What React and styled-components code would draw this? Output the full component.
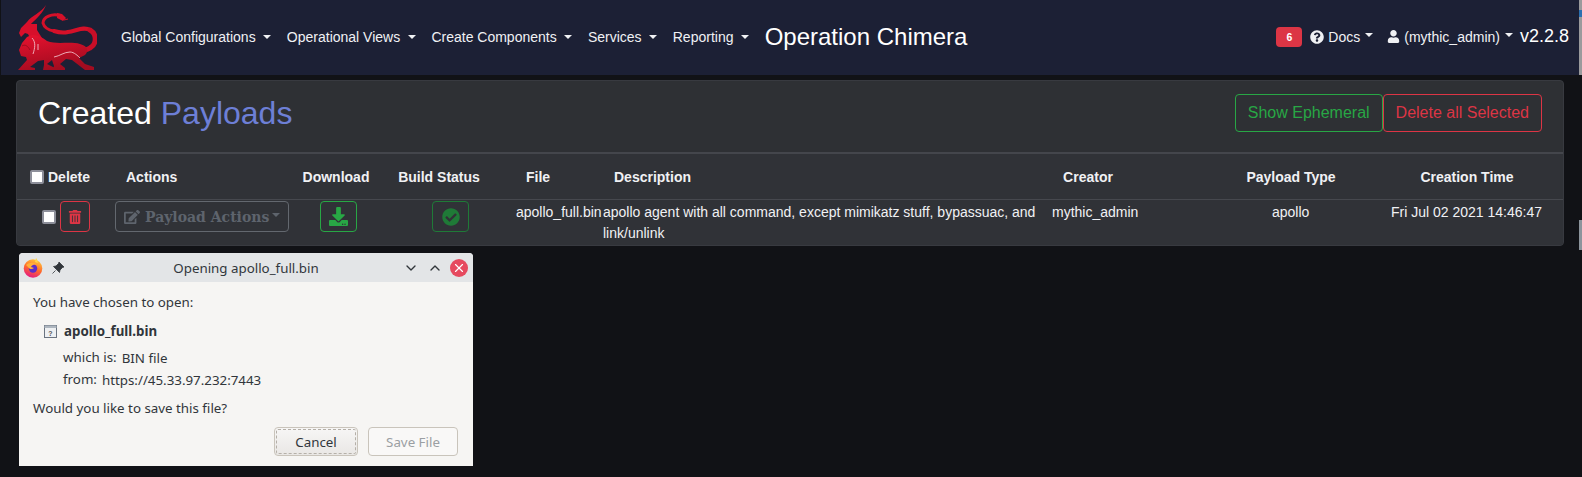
import React from 'react';
import styled, { createGlobalStyle } from 'styled-components';
import { FaTrashAlt, FaEdit, FaDownload, FaCheckCircle, FaQuestionCircle, FaUser } from 'react-icons/fa';
import { FiChevronDown, FiChevronUp, FiX } from 'react-icons/fi';

const GlobalStyle = createGlobalStyle`
  html, body { margin: 0; padding: 0; background: #111216; overflow: hidden; }
  body { font-family: "Liberation Sans", Arial, sans-serif; color: #fff; width: 1582px; height: 477px; position: relative; }
`;

const Sliver = styled.div`
  position: absolute;
  right: 0;
  top: ${p => p.$top}px;
  width: 3px;
  height: ${p => p.$h}px;
  background: ${p => p.$bg};
`;

const Navbar = styled.nav`
  height: 75px;
  width: 1578px;
  margin-left: 1px;
  background: #1c2035;
  display: flex;
  align-items: center;
  padding: 0 10px 2px 16px;
  box-sizing: border-box;
`;

const LogoBox = styled.svg`
  width: 80px;
  height: 75px;
  flex: none;
  margin: 0 24px 0 0;
  align-self: flex-start;
`;

const NavLink = styled.span`
  font-size: 14px;
  color: #f0f1f4;
  margin-right: 15.6px;
  white-space: nowrap;
  &::after {
    content: '';
    display: inline-block;
    margin-left: 7.6px;
    vertical-align: 3px;
    border-top: 4.5px solid #f0f1f4;
    border-left: 4.5px solid transparent;
    border-right: 4.5px solid transparent;
  }
`;

const Operation = styled.span`
  font-size: 24px;
  color: #fff;
`;

const NavRight = styled.div`
  margin-left: auto;
  display: flex;
  align-items: center;
  gap: 8px;
  font-size: 14px;
`;

const Badge = styled.span`
  background: #dc3545;
  border-radius: 4px;
  width: 26px;
  height: 20px;
  display: flex;
  align-items: center;
  justify-content: center;
  font-size: 10.5px;
  font-weight: 700;
`;

const NavMenu = styled.span`
  display: flex;
  align-items: center;
  gap: 4px;
  color: #f0f1f4;
  margin-left: ${p => p.$gap || 0}px;
  &::after {
    content: '';
    margin-left: 1px;
    border-top: 4.5px solid #f0f1f4;
    border-left: 4px solid transparent;
    border-right: 4px solid transparent;
    transform: translateY(-2px);
  }
`;

const Version = styled.span`
  font-size: 18px;
  margin-left: -1px;
`;

const Card = styled.section`
  margin: 5px 18px 0 16px;
  background: #2e3034;
  border-radius: 4px;
  border: 1px solid #383a40;
  box-sizing: border-box;
  height: 166px;
`;

const CardHead = styled.header`
  height: 73px;
  display: flex;
  align-items: center;
  padding: 0 21px 7px 21px;
  border-bottom: 2px solid #44464c;
  box-sizing: border-box;
`;

const Title = styled.h1`
  font-size: 32px;
  font-weight: 400;
  margin: 0;
  color: #fff;
  flex: 1;
  span { color: #6d7fd6; }
`;

const OutlineButton = styled.button`
  font-family: "Liberation Sans", Arial, sans-serif;
  font-size: 16px;
  height: 38px;
  padding: 0 12px;
  background: transparent;
  border: 1px solid ${p => p.$color};
  color: ${p => p.$color};
  border-radius: 4px;
  white-space: nowrap;
`;

const HeaderRow = styled.div`
  height: 46px;
  display: grid;
  grid-template-columns: 100px 173px 92px 114px 84px 420px 176px 230px 122px;
  align-items: center;
  font-size: 14px;
  font-weight: 700;
  color: #f0f1f4;
  background: #303237;
  border-bottom: 1px solid #46484e;
  box-sizing: border-box;
`;

const HeaderCell = styled.div`
  padding-left: ${p => p.$pad || 0}px;
  display: flex;
  align-items: center;
  justify-content: ${p => p.$left ? 'flex-start' : 'center'};
  white-space: nowrap;
`;

const DeleteLabel = styled.span`
  margin-left: 4px;
`;

const DataRow = styled.div`
  height: 45px;
  display: grid;
  grid-template-columns: 98px 205px 112px 84px 87px 449px 220px 119px 1fr;
  background: #303237;
  font-size: 14px;
  color: #f0f1f4;
  border-radius: 0 0 4px 4px;
`;

const DataCell = styled.div`
  line-height: 21px;
  padding-top: 2px;
  white-space: ${p => p.$wrap ? 'normal' : 'nowrap'};
`;

const Check = styled.span`
  display: inline-block;
  width: 14px;
  height: 14px;
  box-sizing: border-box;
  background: #fff;
  border: 2px solid #8d8f9a;
  border-radius: 2px;
  flex: none;
`;

const ActionCell = styled.div`
  display: flex;
  align-items: center;
  height: 31px;
  margin-top: 1px;
  padding-left: ${p => p.$pad || 0}px;
`;

const IconButton = styled.span`
  width: ${p => p.$w || 37}px;
  height: 31px;
  border: 1px solid ${p => p.$color};
  color: ${p => p.$color};
  border-radius: 4px;
  display: flex;
  align-items: center;
  justify-content: center;
  box-sizing: border-box;
  margin-left: ${p => p.$ml || 0}px;
`;

const ActionsButton = styled.span`
  width: 174px;
  height: 31px;
  border: 1px solid #63686f;
  color: #5e646d;
  border-radius: 4px;
  display: flex;
  align-items: center;
  gap: 5px;
  padding-left: 8px;
  box-sizing: border-box;
  font-family: "DejaVu Serif", serif;
  font-weight: 700;
  font-size: 14px;
  white-space: nowrap;
  &::after {
    content: '';
    margin-left: -2px;
    border-top: 4.5px solid #5e646d;
    border-left: 4px solid transparent;
    border-right: 4px solid transparent;
    transform: translateY(-2px);
  }
`;

const Dialog = styled.div`
  margin: 7px 0 0 19px;
  width: 454px;
  height: 213px;
  background: #f6f5f3;
  border-radius: 4px 4px 0 0;
  font-family: "Noto Sans", sans-serif;
  font-size: 13.33px;
  line-height: 18px;
  color: #31363b;
  display: flex;
  flex-direction: column;
`;

const TitleBar = styled.div`
  height: 29px;
  background: #e3e5e7;
  border-radius: 4px 4px 0 0;
  display: grid;
  grid-template-columns: 96px 1fr 96px;
  align-items: center;
  flex: none;
`;

const BarLeft = styled.div`
  display: flex;
  align-items: center;
  gap: 9px;
  padding-left: 4px;
`;

const BarTitle = styled.div`
  text-align: center;
`;

const BarRight = styled.div`
  display: flex;
  align-items: center;
  justify-content: flex-end;
  gap: 8px;
  padding-right: 5px;
`;

const CloseDot = styled.span`
  width: 18px;
  height: 18px;
  border-radius: 50%;
  background: #e64a5f;
  color: #fff;
  display: flex;
  align-items: center;
  justify-content: center;
  margin-left: -1px;
`;

const DialogBody = styled.div`
  padding: 11px 15px 0 14px;
  display: flex;
  flex-direction: column;
  flex: 1;
`;

const FileRow = styled.div`
  display: flex;
  align-items: center;
  gap: 7px;
  margin: 11px 0 0 11px;
  font-weight: 700;
`;

const InfoRow = styled.div`
  display: flex;
  gap: 5px;
  margin: ${p => p.$top}px 0 0 30px;
  span + span { padding-top: 1px; }
`;

const Question = styled.div`
  margin-top: 10px;
`;

const ButtonRow = styled.div`
  display: flex;
  justify-content: flex-end;
  gap: 10px;
  margin-top: 10px;
`;

const DialogButton = styled.span`
  height: 29px;
  width: ${p => p.$w}px;
  box-sizing: border-box;
  border: 1px solid #c9c4bb;
  border-radius: 4px;
  display: flex;
  align-items: center;
  justify-content: center;
  color: ${p => p.$off ? '#9b9fa3' : '#31363b'};
  background: ${p => p.$off ? '#f9f8f7' : 'linear-gradient(#f7f6f5, #e9e7e5)'};
  outline: ${p => p.$off ? 'none' : '1px dashed #b5b0a8'};
  outline-offset: -3px;
`;

const Logo = () => (
  <LogoBox viewBox="17 0 80 75">
    <defs>
      <linearGradient id="red" x1="0" y1="0" x2="0.4" y2="1">
        <stop offset="0" stopColor="#e8122f" />
        <stop offset="1" stopColor="#a30c20" />
      </linearGradient>
    </defs>
    {/* goat head and horn */}
    <path fill="#d80f2b" d="M46 5 C41 13 32 15 27 22 L21 28 L19 33 L21 37 L25 33 L28 34 L30 38 L38 40 L42 38 L37 30 L37 24 L31 24 C37 18 43 13 46 5 Z" />
    {/* snake tail, thinner towards the head */}
    <path fill="none" stroke="#d51029" strokeWidth="3" strokeLinecap="round" d="M60 15.5 C52 13 43 17 43 23 C44 27 48 30 54 31" />
    <path fill="none" stroke="#d51029" strokeWidth="4" strokeLinecap="round" d="M54 31 C60 33 64 33 68 32 C76 31 84 26 90 30" />
    <path fill="none" stroke="#c80e27" strokeWidth="5" strokeLinecap="round" d="M90 30 C97 34 97 44 90 48 C87 50 83 50 80 49" />
    <path fill="#d51029" d="M57 13 L62 14 L66 18 L63 21 L57 18 Z" />
    <path fill="none" stroke="#d51029" strokeWidth="1" d="M64 20 L68 19" />
    {/* lion */}
    <path fill="url(#red)" d="M27 37 C34 33 41 36 47 41 C57 45 70 41 80 44 C88 46 89 51 85 55 L79 58 L85 64 L94 67 L94 70 L85 70 L72 60 L66 59 L60 64 L65 68 L65 70 L53 70 L54 66 L52 60 L47 64 L55 68 L55 70 L43 70 L44 65 L44 60 L38 61 L30 67 L35 68 L35 70 L18 70 L27 60 L26 57 L21 56 L19 50 L22 43 Z" />
    {/* highlights */}
    <path fill="none" stroke="#f2bcc6" strokeWidth="0.9" d="M54 57 C60 56 64 52 70 52 C74 52 78 56 80 58" />
    <path fill="none" stroke="#f2bcc6" strokeWidth="0.9" d="M32 38 C36 42 35 48 33 54" />
    <path fill="none" stroke="#f2bcc6" strokeWidth="0.9" d="M38 44 L38 50" />
    <path fill="none" stroke="#8f0a1c" strokeWidth="0.8" d="M22 46 C25 44 28 46 30 50" />
  </LogoBox>
);

const Firefox = () => (
  <svg width="20" height="20" viewBox="0 0 20 20">
    <defs>
      <linearGradient id="fox" x1="0.7" y1="0" x2="0.3" y2="1">
        <stop offset="0" stopColor="#ffc93c" />
        <stop offset="0.5" stopColor="#ff6b2c" />
        <stop offset="1" stopColor="#e31587" />
      </linearGradient>
    </defs>
    <circle cx="10" cy="10.5" r="9.3" fill="url(#fox)" />
    <path d="M13 0 C15 2 14 3 15 5 L12 4 Z" fill="#ffd84c" />
    <circle cx="10" cy="10.5" r="4.2" fill="#5c2ec9" />
    <path d="M3 7 C6 4 12 4 14 7 C11 6 9 7 8 9 L11 10 C9 12 6 11 5 9 Z" fill="#ffb03a" />
  </svg>
);

const Pin = () => (
  <svg width="12" height="12" viewBox="0 0 12 12">
    <path d="M7 0 L12 5 L10.5 5.5 L8 8 L7.5 10.5 L1.5 4.5 L4 4 L6.5 1.5 Z M3.5 8.5 L0.5 11.5" fill="#31363b" stroke="#31363b" strokeWidth="0.8" />
  </svg>
);

const UnknownFile = () => (
  <svg width="13" height="13" viewBox="0 0 13 13">
    <rect x="0.5" y="0.5" width="12" height="12" fill="#eef0f2" stroke="#6b7480" />
    <rect x="0.5" y="0.5" width="12" height="2.5" fill="#aeb6bf" />
    <text x="6.5" y="10.5" fontSize="7" textAnchor="middle" fill="#555" fontFamily="Liberation Sans">?</text>
  </svg>
);

const App = () => (
  <>
    <GlobalStyle />
    <Navbar>
      <Logo />
      <NavLink>Global Configurations</NavLink>
      <NavLink>Operational Views</NavLink>
      <NavLink>Create Components</NavLink>
      <NavLink>Services</NavLink>
      <NavLink>Reporting</NavLink>
      <Operation>Operation Chimera</Operation>
      <NavRight>
        <Badge>6</Badge>
        <NavMenu><FaQuestionCircle size={14} />Docs</NavMenu>
        <NavMenu $gap={6}><FaUser size={13} />(mythic_admin)</NavMenu>
        <Version>v2.2.8</Version>
      </NavRight>
    </Navbar>
    <Card>
      <CardHead>
        <Title>Created <span>Payloads</span></Title>
        <OutlineButton $color="#28a745">Show Ephemeral</OutlineButton>
        <OutlineButton $color="#dc3545">Delete all Selected</OutlineButton>
      </CardHead>
      <HeaderRow>
        <HeaderCell $left $pad={13}><Check /><DeleteLabel>Delete</DeleteLabel></HeaderCell>
        <HeaderCell $left $pad={9}>Actions</HeaderCell>
        <HeaderCell>Download</HeaderCell>
        <HeaderCell>Build Status</HeaderCell>
        <HeaderCell>File</HeaderCell>
        <HeaderCell $left $pad={34}>Description</HeaderCell>
        <HeaderCell>Creator</HeaderCell>
        <HeaderCell>Payload Type</HeaderCell>
        <HeaderCell>Creation Time</HeaderCell>
      </HeaderRow>
      <DataRow>
        <ActionCell $pad={25}><Check /><IconButton $color="#dc3545" $w={30} $ml={4}><FaTrashAlt size={14} /></IconButton></ActionCell>
        <ActionCell><ActionsButton><FaEdit size={16} />Payload Actions</ActionsButton></ActionCell>
        <ActionCell><IconButton $color="#28a745"><FaDownload size={19} /></IconButton></ActionCell>
        <ActionCell><IconButton $color="#1f7a37"><FaCheckCircle size={18} /></IconButton></ActionCell>
        <DataCell>apollo_full.bin</DataCell>
        <DataCell $wrap>apollo agent with all command, except mimikatz stuff, bypassuac, and link/unlink</DataCell>
        <DataCell>mythic_admin</DataCell>
        <DataCell>apollo</DataCell>
        <DataCell>Fri Jul 02 2021 14:46:47</DataCell>
      </DataRow>
    </Card>
    <Dialog>
      <TitleBar>
        <BarLeft><Firefox /><Pin /></BarLeft>
        <BarTitle>Opening apollo_full.bin</BarTitle>
        <BarRight><FiChevronDown size={16} /><FiChevronUp size={16} /><CloseDot><FiX size={14} /></CloseDot></BarRight>
      </TitleBar>
      <DialogBody>
        <div>You have chosen to open:</div>
        <FileRow><UnknownFile />apollo_full.bin</FileRow>
        <InfoRow $top={8}><span>which is:</span><span>BIN file</span></InfoRow>
        <InfoRow $top={3}><span>from:</span><span>https://45.33.97.232:7443</span></InfoRow>
        <Question>Would you like to save this file?</Question>
        <ButtonRow>
          <DialogButton $w={84}>Cancel</DialogButton>
          <DialogButton $w={90} $off>Save File</DialogButton>
        </ButtonRow>
      </DialogBody>
    </Dialog>
    <Sliver $top={0} $h={75} $bg="#9a9a9c" />
    <Sliver $top={10} $h={7} $bg="#2a6fb0" />
    <Sliver $top={220} $h={30} $bg="#8c949c" />
  </>
);

export default App;
